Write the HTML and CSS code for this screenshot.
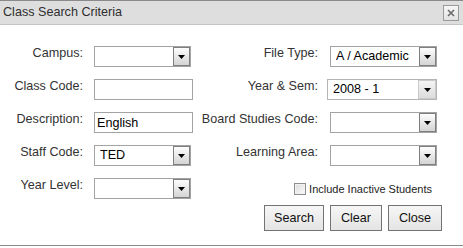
FILE: index.html
```html
<!DOCTYPE html>
<html lang="en">
<head>
  <meta charset="UTF-8" />
  <title>Class Search Criteria</title>
  <link rel="stylesheet" href="styles.css">
</head>
<body>
  <div class="dialog">
    <div class="titlebar">
      <span class="title">Class Search Criteria</span>
      <span class="close-btn">
        <svg width="8" height="8" viewBox="0 0 8 8"><path d="M1 1L7 7M7 1L1 7" stroke="#6a6a6a" stroke-width="1.6"/></svg>
      </span>
    </div>

    <div class="content">
      <div class="criteria">
        <label class="lbl">Campus:</label>
        <div class="combo narrow"><span class="combo-value"></span><span class="combo-btn"><svg width="7" height="4" viewBox="0 0 7 4"><path d="M0 0H7L3.5 4Z" fill="#000"/></svg></span></div>
        <label class="lbl">File Type:</label>
        <div class="combo wide"><span class="combo-value">A / Academic</span><span class="combo-btn"><svg width="7" height="4" viewBox="0 0 7 4"><path d="M0 0H7L3.5 4Z" fill="#000"/></svg></span></div>

        <label class="lbl">Class Code:</label>
        <input class="txt" type="text" value="">
        <label class="lbl">Year &amp; Sem:</label>
        <div class="combo native"><span class="combo-value">2008 - 1</span><span class="combo-btn"><svg width="7" height="4" viewBox="0 0 7 4"><path d="M0 0H7L3.5 4Z" fill="#000"/></svg></span></div>

        <label class="lbl">Description:</label>
        <input class="txt" type="text" value="English">
        <label class="lbl">Board Studies Code:</label>
        <div class="combo wide"><span class="combo-value"></span><span class="combo-btn"><svg width="7" height="4" viewBox="0 0 7 4"><path d="M0 0H7L3.5 4Z" fill="#000"/></svg></span></div>

        <label class="lbl">Staff Code:</label>
        <div class="combo narrow"><span class="combo-value">TED</span><span class="combo-btn"><svg width="7" height="4" viewBox="0 0 7 4"><path d="M0 0H7L3.5 4Z" fill="#000"/></svg></span></div>
        <label class="lbl">Learning Area:</label>
        <div class="combo wide"><span class="combo-value"></span><span class="combo-btn"><svg width="7" height="4" viewBox="0 0 7 4"><path d="M0 0H7L3.5 4Z" fill="#000"/></svg></span></div>

        <label class="lbl">Year Level:</label>
        <div class="combo narrow"><span class="combo-value"></span><span class="combo-btn"><svg width="7" height="4" viewBox="0 0 7 4"><path d="M0 0H7L3.5 4Z" fill="#000"/></svg></span></div>
        <label class="inactive"><span class="check"></span>Include Inactive Students</label>
      </div>

      <div class="actions">
        <button class="btn btn-search">Search</button>
        <button class="btn btn-clear">Clear</button>
        <button class="btn btn-close">Close</button>
      </div>
    </div>
  </div>
</body>
</html>
```

FILE: styles.css
```css
html, body {
  margin: 0;
  padding: 0;
  background: #fff;
}

body {
  font-family: 'Liberation Sans', Arial, sans-serif;
  font-size: 12.6px;
  color: #333;
}

.dialog {
  width: 463px;
  height: 246px;
  border-bottom: 1px solid #8c8c8c;
  box-sizing: border-box;
}

.titlebar {
  display: flex;
  align-items: center;
  justify-content: space-between;
  height: 25px;
  box-sizing: border-box;
  padding: 0 4px 0 3px;
  background: #dedede;
  border-top: 1px solid #8a8a8a;
  border-bottom: 1px solid #c4c4c4;
}

.title {
  color: #2e2e2e;
  line-height: 15px;
}

.close-btn {
  display: flex;
  align-items: center;
  justify-content: center;
  width: 16px;
  height: 16px;
  box-sizing: border-box;
  border: 1px solid #9a9a9a;
  background: linear-gradient(#f6f6f6, #e2e2e2);
}

.content {
  padding-top: 21px;
}

.criteria {
  display: grid;
  grid-template-columns: 94px 100px 133px 110px;
  grid-auto-rows: 21px;
  row-gap: 12px;
}

.lbl {
  text-align: right;
  padding-right: 11px;
  line-height: 15px;
  white-space: nowrap;
  color: #333;
}

.criteria .lbl:nth-child(4n + 3) {
  padding-right: 9px;
}

.combo {
  display: flex;
  height: 21px;
  box-sizing: border-box;
  border: 1px solid #a3a3a3;
  background: #fff;
  color: #000;
}

.combo.narrow {
  width: 97px;
}

.combo.wide {
  width: 107px;
  justify-self: end;
}

.combo.native {
  width: 110px;
  border-color: #b5b5b5;
}

.combo-value {
  flex: 1;
  padding-left: 5px;
  line-height: 19px;
  white-space: nowrap;
  overflow: hidden;
}

.combo-btn {
  display: flex;
  align-items: center;
  justify-content: center;
  width: 17px;
  box-sizing: border-box;
  border: 1px solid #7e7e7e;
  background: linear-gradient(#fdfdfd, #d4d4d4);
}

.combo.native .combo-btn {
  width: 18px;
  border-color: #cacaca;
  background: linear-gradient(#f4f4f4, #dcdcdc);
}

.txt {
  width: 99px;
  height: 21px;
  box-sizing: border-box;
  margin: 0;
  padding: 0 2px;
  border: 1px solid #a3a3a3;
  font: inherit;
  color: #000;
  outline: none;
}

.inactive {
  grid-column: 3 / 5;
  justify-self: end;
  align-self: end;
  display: flex;
  align-items: center;
  gap: 3px;
  margin-right: 5px;
  margin-bottom: 4px;
  font-size: 11px;
  color: #222;
}

.check {
  width: 12px;
  height: 12px;
  box-sizing: border-box;
  border: 1px solid #8e8e8e;
  background: linear-gradient(135deg, #dcdcdc, #fbfbfb);
  box-shadow: inset 0 0 0 1px #f2f2f2;
}

.actions {
  display: flex;
  justify-content: flex-end;
  gap: 6px;
  padding-right: 21px;
  margin-top: 6px;
}

.btn {
  height: 26px;
  box-sizing: border-box;
  margin: 0;
  padding: 0;
  border: 1px solid #747474;
  background: linear-gradient(#f6f6f6, #e4e4e4);
  font: inherit;
  color: #111;
}

.btn-search { width: 60px; }
.btn-clear { width: 52px; }
.btn-close { width: 54px; }
```
